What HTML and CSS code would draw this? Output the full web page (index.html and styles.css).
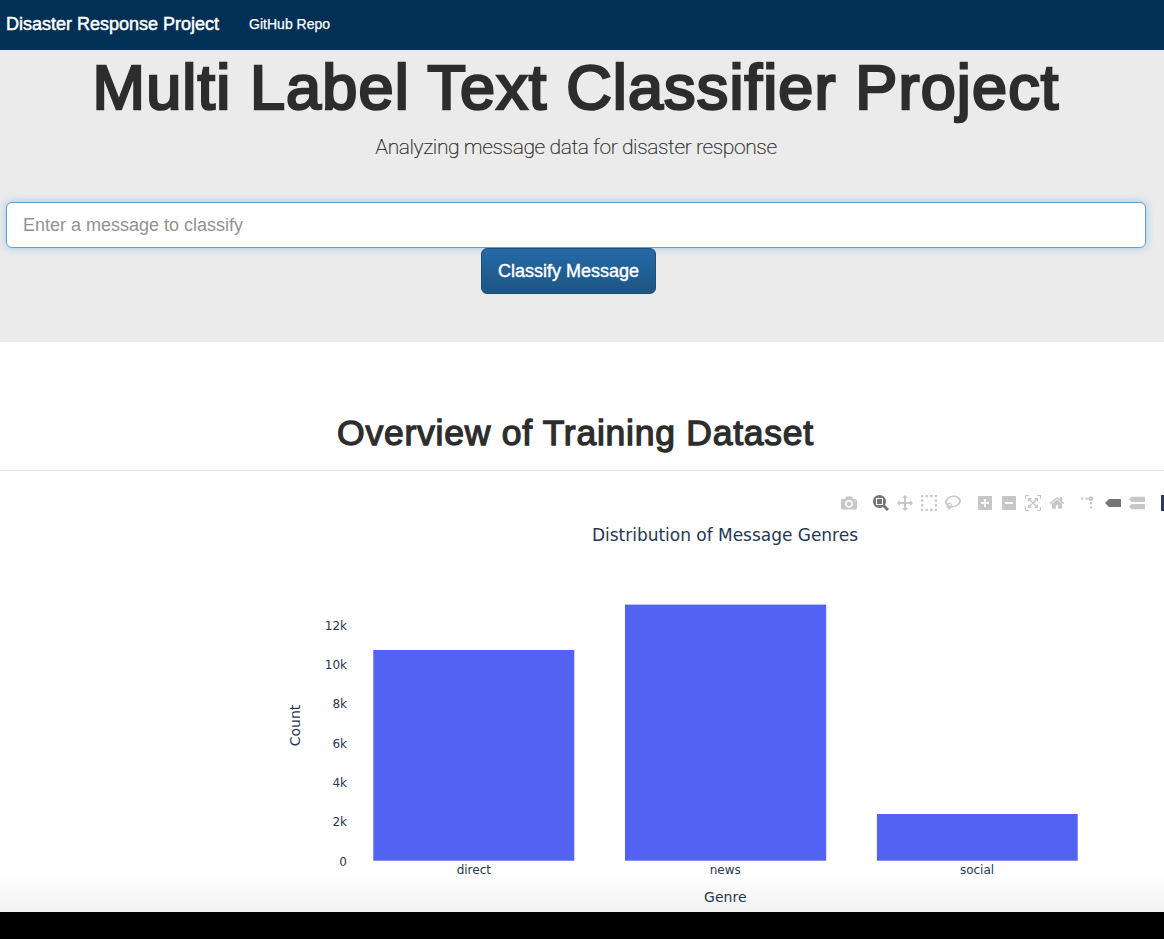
FILE: index.html
```html
<!DOCTYPE html>
<html lang="en">
<head>
<meta charset="utf-8">
<title>Disasters</title>
<link rel="stylesheet" href="styles.css">
</head>
<body>
<nav class="navbar">
  <a class="brand">Disaster Response Project</a>
  <a class="nav-link">GitHub Repo</a>
</nav>
<header class="hero">
  <h1 class="hero-title">Multi Label Text Classifier Project</h1>
  <p class="hero-lead">Analyzing message data for disaster response</p>
  <form class="classify-form">
    <input class="message-input" type="text" placeholder="Enter a message to classify">
    <button class="classify-button" type="button"><span>Classify Message</span></button>
  </form>
</header>
<main class="content">
  <h2 class="page-header"><span>Overview of Training Dataset</span></h2>
  <div class="modebar">
    <div class="group">
      <svg viewBox="0 0 1000 1000"><path transform="matrix(1 0 0 -1 0 850)" d="m500 450c-83 0-150-67-150-150 0-83 67-150 150-150 83 0 150 67 150 150 0 83-67 150-150 150z m400 150h-120c-16 0-34 13-39 29l-31 93c-6 15-23 28-40 28h-340c-16 0-34-13-39-28l-31-94c-6-15-23-28-40-28h-120c-55 0-100-45-100-100v-450c0-55 45-100 100-100h800c55 0 100 45 100 100v450c0 55-45 100-100 100z m-400-550c-138 0-250 112-250 250 0 138 112 250 250 250 138 0 250-112 250-250 0-138-112-250-250-250z m365 380c-19 0-35 16-35 35 0 19 16 35 35 35 19 0 35-16 35-35 0-19-16-35-35-35z"/></svg>
    </div>
    <div class="group">
      <svg class="active" viewBox="0 0 1000 1000"><path transform="matrix(1 0 0 -1 0 850)" d="m1000-25l-250 251c40 63 63 138 63 218 0 224-182 406-407 406-224 0-406-182-406-406s183-406 407-406c80 0 155 22 218 62l250-250 125 125z m-812 250l0 438 437 0 0-438-437 0z m62 375l313 0 0-312-313 0 0 312z"/></svg>
      <svg viewBox="0 0 1000 1000"><path transform="matrix(1 0 0 -1 0 850)" d="m1000 350l-187 188 0-125-250 0 0 250 125 0-188 187-187-187 125 0 0-250-250 0 0 125-188-188 186-187 0 125 252 0 0-250-125 0 187-188 188 188-125 0 0 250 250 0 0-126 187 188z"/></svg>
      <svg viewBox="0 0 1000 1000"><path transform="matrix(1 0 0 -1 0 850)" d="m0 850l0-143 143 0 0 143-143 0z m286 0l0-143 143 0 0 143-143 0z m285 0l0-143 143 0 0 143-143 0z m286 0l0-143 143 0 0 143-143 0z m-857-286l0-143 143 0 0 143-143 0z m857 0l0-143 143 0 0 143-143 0z m-857-285l0-143 143 0 0 143-143 0z m857 0l0-143 143 0 0 143-143 0z m-857-286l0-143 143 0 0 143-143 0z m286 0l0-143 143 0 0 143-143 0z m285 0l0-143 143 0 0 143-143 0z m286 0l0-143 143 0 0 143-143 0z"/></svg>
      <svg viewBox="0 0 1031 1000"><path transform="matrix(1 0 0 -1 0 850)" d="m1018 538c-36 207-290 336-568 286-277-48-473-256-436-463 10-57 36-108 76-151-13-66 11-137 68-183 34-28 75-41 114-42l-55-70 0 0c-2-1-3-2-4-3-10-14-8-34 5-45 14-11 34-8 45 4 1 1 2 3 2 5l0 0 113 140c16 11 31 24 45 40 4 3 6 7 8 11 48-3 100 0 151 9 278 48 473 255 436 462z m-624-379c-80 14-149 48-197 96 42 42 109 47 156 9 33-26 47-66 41-105z m-187-74c-19 16-33 37-39 60 50-32 109-55 174-68-42-25-95-24-135 8z m360 75c-34-7-69-9-102-8 8 62-16 128-68 170-73 59-175 54-244-5-9 20-16 40-20 61-28 159 121 317 333 354s407-60 434-217c28-159-121-318-333-355z"/></svg>
    </div>
    <div class="group">
      <svg viewBox="0 0 875 1000"><path transform="matrix(1 0 0 -1 0 850)" d="m1 787l0-875 875 0 0 875-875 0z m687-500l-187 0 0-187-125 0 0 187-188 0 0 125 188 0 0 187 125 0 0-187 187 0 0-125z"/></svg>
      <svg viewBox="0 0 875 1000"><path transform="matrix(1 0 0 -1 0 850)" d="m0 788l0-876 875 0 0 876-875 0z m688-500l-500 0 0 125 500 0 0-125z"/></svg>
      <svg viewBox="0 0 1000 1000"><path transform="matrix(1 0 0 -1 0 850)" d="m250 850l-187 0-63 0 0-62 0-188 63 0 0 188 187 0 0 62z m688 0l-188 0 0-62 188 0 0-188 62 0 0 188 0 62-62 0z m-875-938l0 188-63 0 0-188 0-62 63 0 187 0 0 62-187 0z m875 188l0-188-188 0 0-62 188 0 62 0 0 62 0 188-62 0z m-125 188l-1 0-93-94-156 156 156 156 92-93 2 0 0 250-250 0 0-2 93-92-156-156-156 156 94 92 0 2-250 0 0-250 0 0 93 93 157-156-157-156-93 94 0 0 0-250 250 0 0 0-94 93 156 157 156-157-93-93 0 0 250 0 0 250z"/></svg>
      <svg viewBox="0 0 928.6 1000"><path transform="matrix(1 0 0 -1 0 850)" d="m786 296v-267q0-15-11-26t-25-10h-214v214h-143v-214h-214q-15 0-25 10t-11 26v267q0 1 0 2t0 2l321 264 321-264q1-1 1-4z m124 39l-34-41q-5-5-12-6h-2q-7 0-12 3l-386 322-386-322q-7-4-13-4-7 2-12 7l-35 41q-4 5-3 13t6 12l401 334q18 15 42 15t43-15l136-114v109q0 8 5 13t13 5h107q8 0 13-5t5-13v-227l122-102q5-5 6-12t-4-13z"/></svg>
    </div>
    <div class="group">
      <svg viewBox="0 0 1000 1000"><path transform="matrix(1.5 0 0 -1.5 0 850)" d="M512 409c0-57-46-104-103-104-57 0-104 47-104 104 0 57 47 103 104 103 57 0 103-46 103-103z m-327-39l92 0 0 92-92 0z m-185 0l92 0 0 92-92 0z m370-186l92 0 0 93-92 0z m0-184l92 0 0 92-92 0z"/></svg>
      <svg class="active" viewBox="0 0 1500 1000"><path transform="matrix(1 0 0 -1 0 850)" d="m375 725l0 0-375-375 375-374 0-1 1125 0 0 750-1125 0z"/></svg>
      <svg viewBox="0 0 1125 1000"><path transform="matrix(1 0 0 -1 0 850)" d="m187 786l0 2-187-188 188-187 0 0 937 0 0 373-938 0z m0-499l0 1-187-188 188-188 0 0 937 0 0 376-938-1z"/></svg>
    </div>
    <div class="group logo"></div>
  </div>
  <svg class="chart" viewBox="0 511 1164 401" width="1164" height="401">
    <text class="chart-title" x="592" y="541" textLength="266">Distribution of Message Genres</text>
    <g class="bars">
      <rect x="373.3" y="650" width="201" height="210.7"/>
      <rect x="625" y="604.6" width="201.2" height="256.1"/>
      <rect x="876.9" y="814" width="200.8" height="46.7"/>
    </g>
    <g class="ticks ticks-y">
      <text x="347" y="630">12k</text>
      <text x="347" y="669">10k</text>
      <text x="347" y="708">8k</text>
      <text x="347" y="748">6k</text>
      <text x="347" y="787">4k</text>
      <text x="347" y="826">2k</text>
      <text x="347" y="866">0</text>
    </g>
    <g class="ticks ticks-x">
      <text x="473.8" y="874">direct</text>
      <text x="725.3" y="874">news</text>
      <text x="977" y="874">social</text>
    </g>
    <text class="axis-title" x="725.3" y="902">Genre</text>
    <text class="axis-title" transform="translate(300 725.5) rotate(-90)">Count</text>
  </svg>
</main>
<footer class="bottom-bar"></footer>
</body>
</html>
```
FILE: styles.css
```css
* { box-sizing: border-box; }

body {
  margin: 0;
  height: 939px;
  overflow: hidden;
  background: #fff;
  color: #2d2d2d;
  font-family: "Liberation Sans", Arial, sans-serif;
}

.navbar {
  display: flex;
  align-items: center;
  gap: 30px;
  height: 50px;
  padding: 0 6px 2px;
  background: #003056;
  color: #fff;
  white-space: nowrap;
}

.brand {
  font-size: 18px;
  -webkit-text-stroke: 0.5px #fff;
}

.nav-link {
  font-size: 14px;
  -webkit-text-stroke: 0.25px #fff;
}

.hero {
  height: 292px;
  padding-right: 12px;
  background: #ebebeb;
  border-top: 1px solid #e1eaf2;
  text-align: center;
}

.hero-title {
  margin: 0;
  padding-top: 1px;
  font-size: 63px;
  line-height: 70px;
  font-weight: 400;
  letter-spacing: 1.15px;
  -webkit-text-stroke: 2.6px #2d2d2d;
  white-space: nowrap;
}

.hero-lead {
  margin: 10px 0 0;
  font-family: Roboto, sans-serif;
  font-size: 21px;
  line-height: 30px;
  font-weight: 200;
  letter-spacing: -0.41px;
  -webkit-text-stroke: 0.2px #2d2d2d;
}

.classify-form {
  display: flex;
  flex-direction: column;
  align-items: center;
  margin-top: 40px;
  padding: 0 6px;
}

.message-input {
  width: 1140px;
  height: 46px;
  padding: 10px 16px;
  border: 1px solid #5ba3d3;
  border-radius: 6px;
  outline: 0;
  background: #fff;
  box-shadow: 0 0 8px rgba(102, 175, 233, 0.6);
  font: 18px/24px "Liberation Sans", Arial, sans-serif;
}

.message-input::placeholder { color: #929292; opacity: 1; }

.classify-button {
  width: 175px;
  height: 46px;
  margin-right: 15px;
  padding: 0;
  border: 1px solid #1d4f7c;
  border-radius: 6px;
  background: linear-gradient(#246aa8, #1e5583);
  color: #fff;
  font: 18px/24px "Liberation Sans", Arial, sans-serif;
  -webkit-text-stroke: 0.4px #fff;
  white-space: nowrap;
}

.content {
  height: 570px;
  padding-top: 60px;
  background: linear-gradient(#fff 0, #fff 530px, #f2f2f2 570px);
}

.page-header {
  margin: 0;
  height: 69px;
  padding: 11px 13px 0 0;
  border-bottom: 1px solid #e8e8e8;
  font-size: 35.5px;
  line-height: 40px;
  font-weight: 400;
  letter-spacing: 0.75px;
  -webkit-text-stroke: 1.3px #2d2d2d;
  text-align: center;
  white-space: nowrap;
}

.modebar {
  display: flex;
  gap: 16px;
  height: 40px;
  padding: 24px 0 0 841px;
  overflow: hidden;
}

.group { display: flex; flex: none; gap: 8px; }

.group svg { width: 16px; height: 16px; fill: #c7c7c7; }

.group .active { fill: #757575; }

.logo { width: 16px; height: 16px; background: #2b3a61; }

.chart {
  display: block;
  fill: #263855;
  font-family: "DejaVu Sans", Verdana, sans-serif;
}

.chart-title { font-size: 17px; }

.bars { fill: #5263f3; }

.ticks { font-size: 12px; }

.ticks-y { text-anchor: end; }

.ticks-x, .axis-title { text-anchor: middle; }

.axis-title { font-size: 14px; }

.bottom-bar { height: 27px; background: #000; }
```
